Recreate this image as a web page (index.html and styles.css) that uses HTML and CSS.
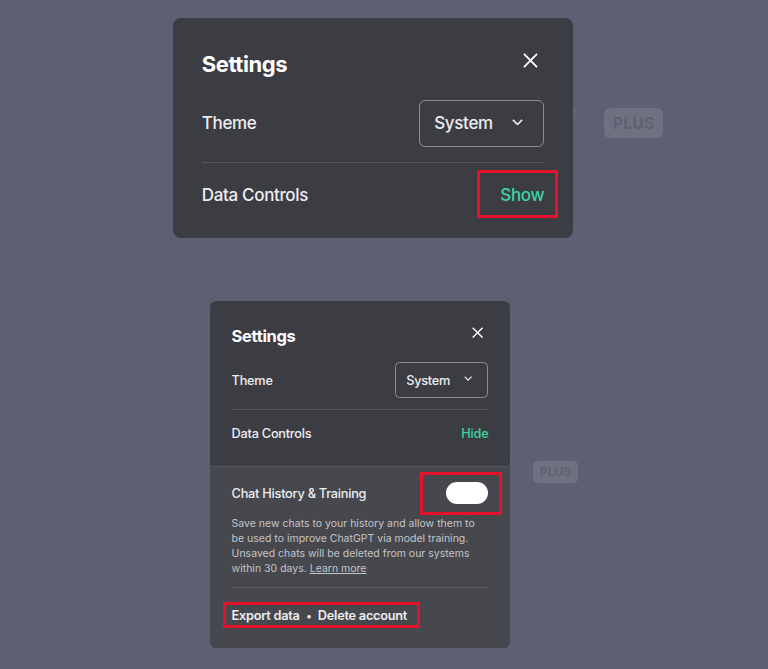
FILE: index.html
```html
<!DOCTYPE html>
<html lang="en">
<head>
    <meta charset="UTF-8">
    <title>Settings</title>
    <link rel="stylesheet" href="styles.css">
</head>
<body>
    <!-- Collapsed state -->
    <section class="scene scene--collapsed">
        <div class="brand">
            <span class="brand-name">ChatGPT</span>
            <span class="brand-badge">PLUS</span>
        </div>
        <div class="modal">
            <div class="modal-header">
                <h2>Settings</h2>
                <button class="close-btn" aria-label="Close">
                    <svg viewBox="0 0 16 16"><path d="M1 1L15 15M15 1L1 15"/></svg>
                </button>
            </div>
            <div class="row row--theme">
                <span class="label">Theme</span>
                <div class="select">
                    <span>System</span>
                    <svg class="chevron" viewBox="0 0 12 7"><path d="M1 1l5 5 5-5"/></svg>
                </div>
            </div>
            <div class="row row--data">
                <span class="label">Data Controls</span>
                <span class="link-toggle marked marked--show">Show</span>
            </div>
        </div>
    </section>

    <!-- Expanded state -->
    <section class="scene scene--expanded">
        <div class="brand">
            <span class="brand-name">ChatGPT</span>
            <span class="brand-badge">PLUS</span>
        </div>
        <div class="modal">
            <div class="modal-header">
                <h2>Settings</h2>
                <button class="close-btn" aria-label="Close">
                    <svg viewBox="0 0 16 16"><path d="M1 1L15 15M15 1L1 15"/></svg>
                </button>
            </div>
            <div class="row row--theme">
                <span class="label">Theme</span>
                <div class="select">
                    <span>System</span>
                    <svg class="chevron" viewBox="0 0 12 7"><path d="M1 1l5 5 5-5"/></svg>
                </div>
            </div>
            <div class="row row--data">
                <span class="label">Data Controls</span>
                <span class="link-toggle">Hide</span>
            </div>
            <div class="data-controls">
                <div class="history">
                    <span class="label">Chat History &amp; Training</span>
                    <span class="switch marked marked--switch"></span>
                </div>
                <p class="hint">Save new chats to your history and allow them to be used to improve ChatGPT via model training. Unsaved chats will be deleted from our systems within 30 days. <a href="#">Learn more</a></p>
                <div class="account-links">
                    <span class="marked marked--links">Export data<span class="dot">&bull;</span>Delete account</span>
                </div>
            </div>
        </div>
    </section>
</body>
</html>
```

FILE: styles.css
```css
body {
    margin: 0;
    padding-top: 18px;
    min-height: 100vh;
    box-sizing: border-box;
    background: #5d5f73;
    font-family: 'Inter', 'Liberation Sans', sans-serif;
    color: #ececf1;
    overflow: hidden;
}

.scene {
    position: relative;
    width: 25em;
}

.scene--collapsed {
    font-size: 16px;
    margin-left: 173px;
}

.scene--expanded {
    font-size: 12px;
    margin: 63px 0 0 210px;
}

/* Page heading sitting behind the dialog */
.brand {
    position: absolute;
    left: 26.94em;
    top: 5.625em;
    z-index: 0;
}

.scene--expanded .brand {
    top: 13.33em;
}

.brand-name {
    position: absolute;
    right: calc(100% + 0.7em);
    top: 50%;
    transform: translateY(-50%);
    font-size: 2.4em;
    font-weight: 700;
    color: #65677b;
    white-space: nowrap;
}

.brand-badge {
    display: block;
    padding: 0 0.55em;
    height: 1.875em;
    line-height: 1.875em;
    border-radius: 0.375em;
    background: #6f7181;
    color: #5f6173;
    font-size: 1em;
    font-weight: 700;
}

/* Dialog */
.modal {
    position: relative;
    z-index: 1;
    background: #3c3d42;
    border-radius: 0.5em;
    overflow: hidden;
}

.modal-header {
    display: flex;
    justify-content: space-between;
    align-items: flex-start;
    padding: 2.0625em 1.8em 0;
}

.modal-header h2 {
    margin: 0;
    font-size: 1.375em;
    line-height: 1.27;
    font-weight: 700;
    color: #fff;
    letter-spacing: -0.02em;
}

.close-btn {
    margin: 0.125em 0.4em 0 0;
    padding: 0;
    border: none;
    background: none;
    width: 0.9375em;
    height: 0.9375em;
    font-size: inherit;
    cursor: pointer;
}

.close-btn svg {
    display: block;
    width: 100%;
    height: 100%;
    stroke: #fff;
    stroke-width: 2;
    fill: none;
}

.row {
    display: flex;
    justify-content: space-between;
    align-items: center;
    margin: 0 1.8em;
}

.row--theme {
    padding: 1.3125em 0 0.9375em;
    border-bottom: 1px solid #56575d;
}

.row--data {
    padding: 1.25em 0 1.9375em;
    line-height: 1.5em;
}

.label {
    font-size: 1.0625em;
    font-weight: 500;
    letter-spacing: -0.02em;
}

.select {
    display: flex;
    justify-content: space-between;
    align-items: center;
    box-sizing: border-box;
    width: 7.8125em;
    height: 2.9375em;
    padding: 0 1.25em 0 0.875em;
    border: 1px solid #8b8c93;
    border-radius: 0.375em;
}

.select span {
    font-size: 1.0625em;
    font-weight: 500;
    letter-spacing: -0.02em;
}

.chevron {
    width: 0.6875em;
    height: 0.4em;
    margin-top: -0.2em;
    fill: none;
    stroke: #ececf1;
    stroke-width: 1.8;
}

.link-toggle {
    font-size: 1.0625em;
    font-weight: 500;
    color: #3dd3a3;
    letter-spacing: -0.02em;
}

/* Expanded data controls */
.data-controls {
    background: #47484d;
    border-top: 1px solid #55565b;
    padding: 1.25em 1.8em 0;
}

.history {
    display: flex;
    justify-content: space-between;
    align-items: center;
}

.switch {
    display: block;
    width: 3.5em;
    height: 1.833em;
    border-radius: 1em;
    background: #fff;
}

.hint {
    margin: 1.14em 0 0;
    padding-bottom: 1em;
    border-bottom: 1px solid #5c5d63;
    font-size: 0.875em;
    line-height: 1.43;
    color: #c3c4ca;
}

.hint a {
    color: inherit;
}

.account-links {
    padding: 1.58em 0 1.83em;
    line-height: 1.5em;
}

.account-links .marked {
    font-size: 1.0625em;
    font-weight: 600;
    letter-spacing: -0.02em;
    color: #ececf1;
}

.dot {
    display: inline-block;
    margin: 0 0.6em;
    font-size: 0.85em;
}

/* Red callout boxes */
.marked {
    position: relative;
}

.marked::after {
    content: "";
    position: absolute;
    border: 3px solid #e5122e;
    pointer-events: none;
}

.marked--show::after {
    top: -13px;
    bottom: -11px;
    left: -23px;
    right: -14px;
}

.marked--switch::after {
    top: -10px;
    bottom: -11px;
    left: -26px;
    right: -14px;
}

.marked--links::after {
    top: -6px;
    bottom: -5px;
    left: -9px;
    right: -13px;
}
```
